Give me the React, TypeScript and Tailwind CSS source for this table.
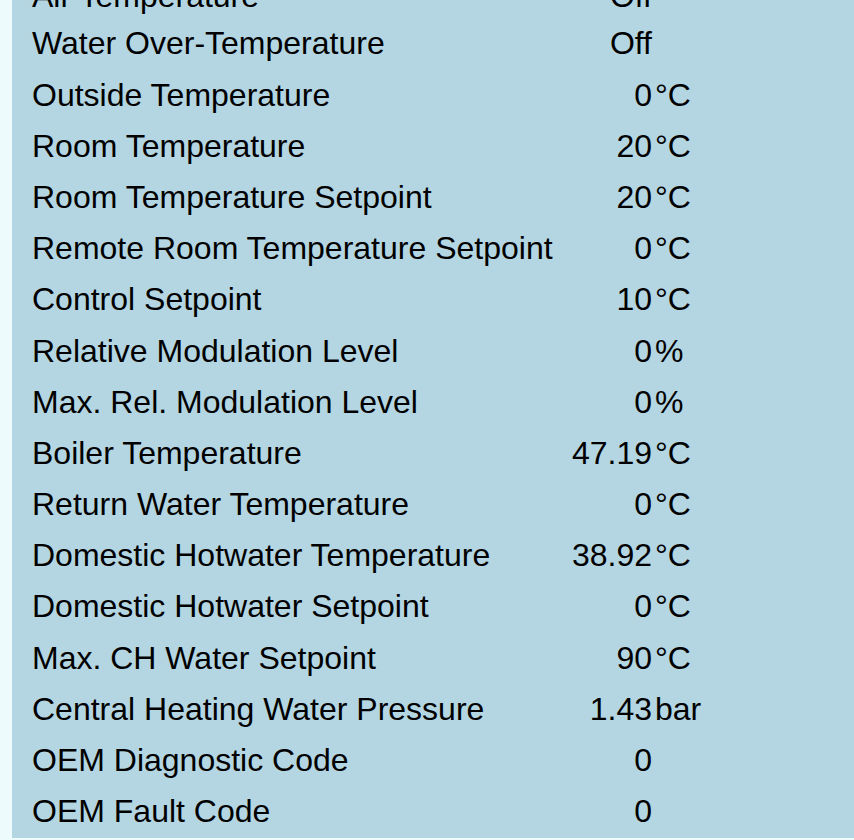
import React from "react";

type Row = { label: string; value: string; unit?: string };

const rows: Row[] = [
  { label: "Water Over-Temperature", value: "Off" },
  { label: "Outside Temperature", value: "0", unit: "°C" },
  { label: "Room Temperature", value: "20", unit: "°C" },
  { label: "Room Temperature Setpoint", value: "20", unit: "°C" },
  { label: "Remote Room Temperature Setpoint", value: "0", unit: "°C" },
  { label: "Control Setpoint", value: "10", unit: "°C" },
  { label: "Relative Modulation Level", value: "0", unit: "%" },
  { label: "Max. Rel. Modulation Level", value: "0", unit: "%" },
  { label: "Boiler Temperature", value: "47.19", unit: "°C" },
  { label: "Return Water Temperature", value: "0", unit: "°C" },
  { label: "Domestic Hotwater Temperature", value: "38.92", unit: "°C" },
  { label: "Domestic Hotwater Setpoint", value: "0", unit: "°C" },
  { label: "Max. CH Water Setpoint", value: "90", unit: "°C" },
  { label: "Central Heating Water Pressure", value: "1.43", unit: "bar" },
  { label: "OEM Diagnostic Code", value: "0" },
  { label: "OEM Fault Code", value: "0" },
];

function DataRow({ row, first }: { row: Row; first?: boolean }) {
  return (
    <div
      className={
        first
          ? "grid grid-cols-[526px_94px_3px_auto] h-[47.1px] leading-[51.2px]"
          : "grid grid-cols-[526px_94px_3px_auto] h-[51.2px] leading-[51.2px]"
      }
    >
      <div className="whitespace-nowrap">{row.label}</div>
      <div className="text-right whitespace-nowrap">{row.value}</div>
      <div />
      <div className="whitespace-nowrap">{row.unit ?? ""}</div>
    </div>
  );
}

export default function App() {
  return (
    <div
      className="h-[840px] w-[854px] overflow-hidden bg-[#eefbfd] pl-[12px] text-black"
      style={{ fontFamily: '"Liberation Sans", Arial, Helvetica, sans-serif' }}
    >
      <div className="h-[838px] overflow-hidden bg-[#b4d6e2]">
        <div className="mt-[-28.7px] pl-[20px] text-[32px]">
          <DataRow row={{ label: "Air Temperature", value: "Off" }} first />
          {rows.map((r) => (
            <DataRow key={r.label} row={r} />
          ))}
        </div>
      </div>
    </div>
  );
}
